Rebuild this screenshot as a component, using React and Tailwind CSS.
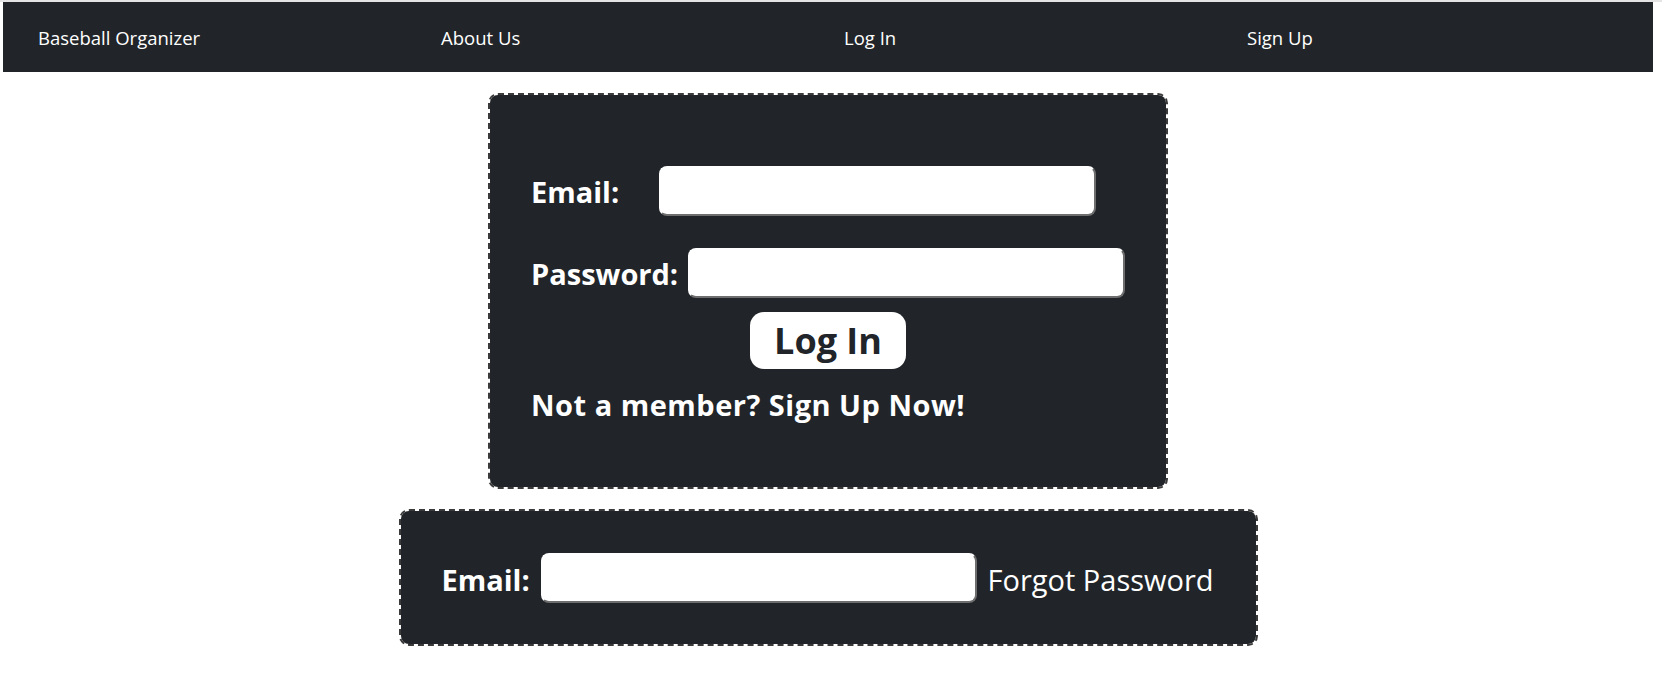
export default function App() {
  const font = { fontFamily: '"Open Sans", "Noto Sans", Arial, sans-serif' };
  return (
    <div className="min-h-[676px] bg-white border-t-2 border-[#e4e4e4]" style={font}>
      <div className="ml-[3px] w-[1650px]">
        <nav className="h-[70px] bg-[#212529] flex items-center pl-[35px] pt-[2px] text-white text-[18.5px]">
          <div className="w-[403px]">Baseball Organizer</div>
          <div className="w-[403px]">About Us</div>
          <div className="w-[403px]">Log In</div>
          <div className="w-[403px]">Sign Up</div>
        </nav>
        <main className="flex flex-col items-center">
          <div className="mt-[21px] w-[680px] h-[396px] bg-[#212529] bg-clip-padding border-2 border-dashed border-[#3a3a3a] rounded-[10px] pt-[71px] pl-[41px] text-white">
            <div className="flex items-center h-[50px]">
              <label className="w-[128px] font-bold text-[29px] mt-[2px]">Email:</label>
              <input type="email" className="w-[437px] h-[50px] bg-white rounded-[8px] border-2 border-white border-b-[#6e6e6e] border-r-[#6e6e6e] outline-none" />
            </div>
            <div className="flex items-center h-[50px] mt-[32px]">
              <label className="w-[157px] font-bold text-[29px] mt-[2px]">Password:</label>
              <input type="password" className="w-[437px] h-[50px] bg-white rounded-[8px] border-2 border-white border-b-[#6e6e6e] border-r-[#6e6e6e] outline-none" />
            </div>
            <div className="flex justify-center mt-[14px] -ml-[41px]">
              <button className="w-[156px] h-[57px] bg-white text-[#212529] rounded-[14px] font-bold text-[36px] leading-none">Log In</button>
            </div>
            <div className="mt-[14px] font-bold text-[29px] tracking-[0.5px]">Not a member? Sign Up Now!</div>
          </div>
          <div className="mt-[20px] w-[859px] h-[137px] bg-[#212529] bg-clip-padding border-2 border-dashed border-[#3a3a3a] rounded-[10px] pl-[41px] flex items-center text-white">
            <label className="w-[99px] font-bold text-[29px] mt-[4px]">Email:</label>
            <input type="email" className="w-[436px] h-[50px] bg-white rounded-[8px] border-2 border-white border-b-[#6e6e6e] border-r-[#6e6e6e] outline-none" />
            <span className="ml-[11px] text-[29px] mt-[4px]">Forgot Password</span>
          </div>
        </main>
      </div>
    </div>
  );
}
